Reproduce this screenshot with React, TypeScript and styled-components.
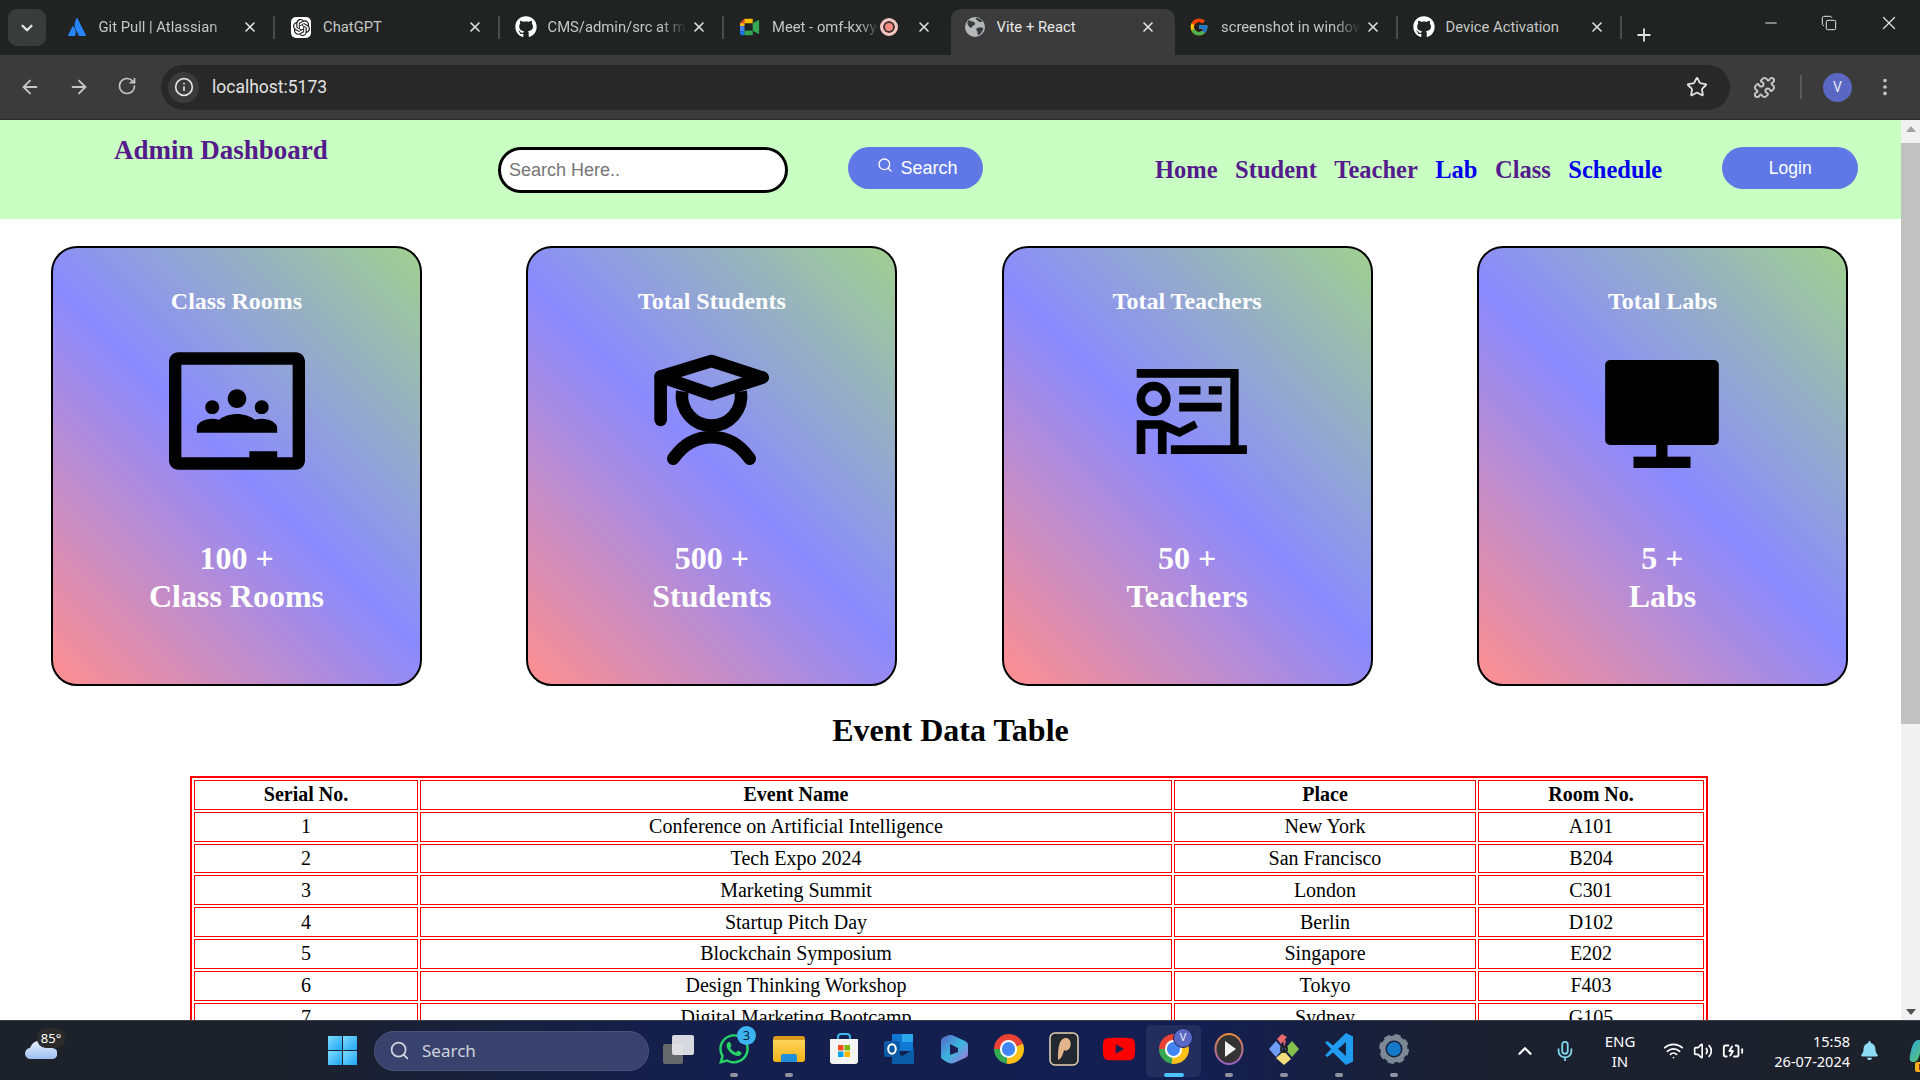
import React from 'react';
import styled, {createGlobalStyle} from 'styled-components';
import {
  ArrowLeft, ArrowRight, RotateCw, Info, Star, Puzzle, MoreVertical, X, Plus, Minus, Copy,
  ChevronDown, ChevronUp, Search as SearchIcon, Mic, Wifi, Volume2, BatteryCharging
} from 'lucide-react';
import {FaGithub, FaWhatsapp, FaYoutube, FaBell} from 'react-icons/fa';
import {FcGoogle} from 'react-icons/fc';
import {SiAtlassian, SiOpenai, SiGoogleclassroom} from 'react-icons/si';

const GlobalStyle = createGlobalStyle`
  html, body {
    margin: 0;
    padding: 0;
    height: 100%;
    overflow: hidden;
  }
  * { box-sizing: border-box; }
  a { text-decoration: none; }
`;

/* ---------- favicons and drawn icons ---------- */

const MeetIcon = () => (
  <svg width="22" height="20" viewBox="0 0 22 20">
    <path d="M5 1h9v5H5v3H0V6z" fill="#fbbc04"/>
    <path d="M0 9h5v6H0z" fill="#4285f4"/>
    <path d="M0 15h5v4H2a2 2 0 0 1-2-2z" fill="#1a73e8"/>
    <path d="M5 14h9v5H5z" fill="#34a853"/>
    <path d="M14 1v18l2-2V3z" fill="#ea4335" opacity="0"/>
    <path d="M14 6l7-4v16l-7-4z" fill="#34a853"/>
    <path d="M5 1v5H0z" fill="#ea4335"/>
  </svg>
);

const GlobeIcon = () => (
  <svg width="20" height="20" viewBox="0 0 20 20">
    <circle cx="10" cy="10" r="10" fill="#b5b7ba"/>
    <path d="M4 3c2 2 5 1 6 3s-2 2-3 4-3 0-4-2-1-3 1-5zM12 11c2-1 5-1 6 0s-2 6-4 7-1-3-2-4 -1-2 0-3zM11 1c2 0 5 1 6 3s-3 1-4 0-3-2-2-3z" fill="#3b3b3b"/>
  </svg>
);

const ClassroomGlyph = () => <SiGoogleclassroom size={136} color="#000"/>;

const StudentGlyph = () => (
  <svg width="117" height="115" viewBox="400 338 352 344" fill="none" stroke="#000" strokeWidth="38" strokeLinecap="round" strokeLinejoin="round">
    <path d="M423 405L576 358 730 408 576 458z" strokeLinejoin="round"/>
    <path d="M423 405V535"/>
    <path d="M488 450a89 89 0 1 0 176 0" strokeLinecap="butt"/>
    <path d="M461 652C490 610 530 587 576 587S662 610 691 652"/>
  </svg>
);

const TeacherGlyph = () => (
  <svg width="119" height="85" viewBox="382 382 358 256" fill="#000">
    <path d="M408 382H715V612H740V638H511V612H690V408H408z"/>
    <circle cx="459" cy="472" r="38.5" fill="none" stroke="#000" strokeWidth="26"/>
    <path d="M536 434H600V459H536zM625 434H664V459H625zM536 484H664V510H536z"/>
    <path d="M408 536H485L537 560 582 537 592 558 537 587 498 570V638H472V562H434V638H408z"/>
  </svg>
);

const LabGlyph = () => (
  <svg width="114" height="114" viewBox="406 339 341 342" fill="#000">
    <rect x="406" y="357" width="341" height="255" rx="15"/>
    <rect x="559" y="610" width="34" height="40"/>
    <rect x="491" y="647" width="171" height="34"/>
  </svg>
);

const StoreIcon = () => (
  <svg width="30" height="32" viewBox="0 0 30 32">
    <path d="M9 8V4a3 3 0 0 1 3-3h6a3 3 0 0 1 3 3v4" fill="none" stroke="#39b8ea" strokeWidth="2"/>
    <path d="M1 6h28v22a3 3 0 0 1-3 3H4a3 3 0 0 1-3-3z" fill="#f4f4f4"/>
    <path d="M9 12h5.500v5.500H9z" fill="#f25022"/>
    <path d="M15.500 12H21v5.500h-5.500z" fill="#7fba00"/>
    <path d="M9 18.500h5.500V24H9z" fill="#00a4ef"/>
    <path d="M15.500 18.500H21V24h-5.500z" fill="#ffb900"/>
  </svg>
);

const OutlookIcon = () => (
  <svg width="30" height="32" viewBox="0 0 30 32">
    <path d="M8 1h21v17H8z" fill="#0f78d4"/>
    <path d="M18 1h11v8H18z" fill="#28a8ea"/>
    <path d="M8 16l10 7 12-7v14a1 1 0 0 1-1 1H9a1 1 0 0 1-1-1z" fill="#0a5ea8"/>
    <rect x="0" y="8" width="16" height="16" rx="2" fill="#0b5aa5"/>
    <ellipse cx="8" cy="16" rx="3.800" ry="4.800" fill="none" stroke="#fff" strokeWidth="2"/>
  </svg>
);

const M365Icon = () => (
  <svg width="28" height="30" viewBox="0 0 28 30">
    <defs>
      <linearGradient id="m365" x1="0" y1="0" x2="1" y2="1">
        <stop offset="0" stopColor="#5b62c9"/>
        <stop offset="0.5" stopColor="#39b7dd"/>
        <stop offset="1" stopColor="#b06fd8"/>
      </linearGradient>
    </defs>
    <path d="M12 1L25 7c2 1 3 2 3 4v9c0 2-1 3-3 4l-11 5c-3 1-6 0-9-2L1 24V7c0-2 1-3 3-4l5-2z" fill="url(#m365)"/>
    <path d="M10 10l8 4v4l-8 3z" fill="#1a2050"/>
  </svg>
);

const ChromeBall = styled.div<{$size: number}>`
  width: ${p => p.$size}px;
  height: ${p => p.$size}px;
  border-radius: 50%;
  display: flex;
  align-items: center;
  justify-content: center;
  background: conic-gradient(#ea4335 0 70deg, #fbc116 70deg 190deg, #34a853 190deg 270deg, #ea4335 270deg);
  &::after {
    content: '';
    width: 44%;
    height: 44%;
    border-radius: 50%;
    background: #4285f4;
    border: ${p => Math.round(p.$size / 14)}px solid #fff;
    box-sizing: content-box;
  }
`;

const PapyrusIcon = () => (
  <svg width="30" height="34" viewBox="0 0 30 34">
    <rect x="1" y="1" width="28" height="32" rx="5" fill="#23272f" stroke="#e7d3b4" strokeWidth="1.500"/>
    <path d="M9 28C9 16 10 6 17 6c5 0 6 7 3 11-2 2-4 2-5 1-1 5-3 9-6 10z" fill="#e2b48c"/>
  </svg>
);

const PlayerIcon = () => (
  <svg width="30" height="32" viewBox="0 0 30 32">
    <defs>
      <linearGradient id="player" x1="0" y1="0" x2="0" y2="1">
        <stop offset="0" stopColor="#e8893f"/>
        <stop offset="1" stopColor="#9a62c2"/>
      </linearGradient>
    </defs>
    <ellipse cx="15" cy="16" rx="13.500" ry="15" fill="#333" stroke="url(#player)" strokeWidth="2"/>
    <path d="M11 8l11 8-11 8z" fill="#f2f2f2"/>
  </svg>
);

const GitIcon = () => (
  <svg width="32" height="34" viewBox="0 0 32 34">
    <path d="M1 17l7-8 7 8-7 8z" fill="#6f9cf4"/>
    <path d="M9 7l5-5 5 3-6 7z" fill="#e8696b"/>
    <path d="M17 17l7-8 7 8-7 8z" fill="#86c04d"/>
    <path d="M8 26l8-7 7 8-7 6z" fill="#f0dc7a"/>
    <circle cx="16" cy="17" r="3" fill="none" stroke="#222" strokeWidth="2"/>
    <path d="M15 7l3 2-2 6z" fill="#e8696b"/>
  </svg>
);

const VSCodeIcon = () => (
  <svg width="30" height="34" viewBox="0 0 30 34">
    <path d="M22 1l7 3.500v25L22 33 9 20.500l-5.500 4.500L1 23.500 7 17 1 10.500 3.500 9 9 13.500zM22 10l-8 7 8 7z" fill="#1f9cf0"/>
  </svg>
);

const GearIcon = () => (
  <svg width="30" height="32" viewBox="0 0 30 32">
    <circle cx="15" cy="16" r="11" fill="none" stroke="#7d8896" strokeWidth="5"/>
    <circle cx="15" cy="16" r="13" fill="none" stroke="#7d8896" strokeWidth="4" strokeDasharray="6 4.200"/>
    <circle cx="15" cy="16" r="7" fill="#1479c9"/>
  </svg>
);

const CloudIcon = () => (
  <svg width="32" height="22" viewBox="0 0 32 22">
    <defs>
      <linearGradient id="cloud" x1="0" y1="0" x2="0" y2="1">
        <stop offset="0" stopColor="#e9f2fd"/>
        <stop offset="1" stopColor="#9dbff0"/>
      </linearGradient>
    </defs>
    <path d="M6 21a5.500 5.500 0 0 1-1-11C7 4 13 1 19 3c5 2 8 5 8 7a5.500 5.500 0 0 1 0 11z" fill="url(#cloud)"/>
  </svg>
);

const CopilotIcon = () => (
  <svg width="30" height="24" viewBox="0 0 30 24">
    <defs>
      <linearGradient id="copA" x1="0" y1="0" x2="1" y2="1">
        <stop offset="0" stopColor="#2ea8e0"/>
        <stop offset="1" stopColor="#5fc85b"/>
      </linearGradient>
      <linearGradient id="copB" x1="0" y1="0" x2="1" y2="1">
        <stop offset="0" stopColor="#3a6fe0"/>
        <stop offset="1" stopColor="#e868b8"/>
      </linearGradient>
    </defs>
    <path d="M9 1h8c-3 2-5 7-6 13-1 5-3 9-6 9H4c-3 0-4-3-3-6 1-6 3-16 8-16z" fill="url(#copA)"/>
    <path d="M17 1c3 0 5 3 6 6 3 0 6 4 6 9 0 4-2 7-5 7h-9c3-1 5-5 6-10 1-5-1-10-4-12z" fill="url(#copB)"/>
  </svg>
);

/* ---------- browser chrome ---------- */

const Frame = styled.div`
  width: 1920px;
  height: 1080px;
  display: flex;
  flex-direction: column;
  overflow: hidden;
  background: #fff;
`;
const TabStrip = styled.div`
  height: 55px;
  flex: none;
  display: flex;
  align-items: flex-end;
  background: #202322;
  padding-left: 8px;
`;
const TabSearch = styled.div`
  width: 38px;
  height: 37px;
  margin: 0 6.500px 9px 0;
  border-radius: 9px;
  background: #3a3b3b;
  color: #e6e6e6;
  display: flex;
  align-items: center;
  justify-content: center;
`;
const Tab = styled.div<{$active?: boolean; $sep?: boolean}>`
  position: relative;
  width: 224.500px;
  height: 46px;
  flex: none;
  display: flex;
  align-items: center;
  padding: 0 19px 10px 14px;
  border-radius: 10px 10px 0 0;
  background: ${p => p.$active ? '#3b3b3b' : 'transparent'};
  color: ${p => p.$active ? '#e8e8e8' : '#c4c7c5'};
  &::after {
    content: '';
    display: ${p => p.$sep ? 'block' : 'none'};
    position: absolute;
    right: 2px;
    top: 7px;
    width: 2px;
    height: 23px;
    background: #4a4c4b;
  }
`;
const Favicon = styled.span`
  width: 20px;
  height: 20px;
  flex: none;
  display: flex;
  align-items: center;
  justify-content: center;
`;
const ChatGptBox = styled.span`
  width: 21px;
  height: 21px;
  border-radius: 5px;
  background: #fff;
  display: flex;
  align-items: center;
  justify-content: center;
`;
const GithubBall = styled.span`
  width: 22px;
  height: 22px;
  display: flex;
  align-items: center;
  justify-content: center;
  color: #fff;
`;
const TabTitle = styled.span<{$fade?: boolean}>`
  flex: 1;
  min-width: 0;
  margin-left: 12px;
  white-space: nowrap;
  overflow: hidden;
  font: 14.800px Roboto, "Noto Sans", sans-serif;
  mask-image: ${p => p.$fade ? 'linear-gradient(90deg, #000 80%, transparent)' : 'none'};
`;
const RecDot = styled.span`
  width: 18px;
  height: 18px;
  flex: none;
  margin-right: 14px;
  border-radius: 50%;
  border: 3px solid #f4c7c3;
  background: #f28b82;
  box-shadow: inset 0 0 0 2px #3a3030;
`;
const TabClose = styled(X)`
  flex: none;
  margin-left: 4px;
  color: #e3e3e3;
`;
const NewTab = styled(Plus)`
  flex: none;
  margin: 0 0 10px 10px;
  color: #e3e3e3;
`;
const WindowControls = styled.div`
  margin-left: auto;
  height: 100%;
  display: flex;
  align-items: center;
  padding-right: 20px;
  gap: 41px;
  color: #e3e3e3;
  padding-bottom: 10px;
`;
const Toolbar = styled.div`
  height: 64px;
  flex: none;
  display: flex;
  align-items: center;
  background: #3b3b3b;
  padding: 0 18px 0 19px;
  color: #c7c7c7;
`;
const NavIcons = styled.div`
  display: flex;
  gap: 27px;
  margin-right: 24px;
`;
const Omnibox = styled.div`
  width: 1569px;
  height: 45px;
  display: flex;
  align-items: center;
  padding: 0 16px 0 7px;
  border-radius: 23px;
  background: #282828;
`;
const SiteInfo = styled.div`
  width: 31px;
  height: 31px;
  border-radius: 50%;
  background: #3b3b3b;
  color: #e3e3e3;
  display: flex;
  align-items: center;
  justify-content: center;
`;
const UrlText = styled.span`
  margin-left: 13px;
  font: 17.500px Roboto, "Noto Sans", sans-serif;
  color: #e3e3e3;
`;
const StarIcon = styled(Star)`
  margin-left: auto;
  margin-right: 6px;
  color: #e3e3e3;
`;
const ToolIcons = styled.div`
  display: flex;
  align-items: center;
  margin-left: 23px;
`;
const ToolDivider = styled.span`
  width: 2px;
  height: 24px;
  margin: 0 21px 0 24px;
  background: #5a5a5a;
`;
const Avatar = styled.span`
  width: 29px;
  height: 29px;
  border-radius: 50%;
  background: #5a68c4;
  color: #e8e8f8;
  font: 14px Roboto, sans-serif;
  display: flex;
  align-items: center;
  justify-content: center;
  margin-right: 22px;
`;

/* ---------- page ---------- */

const Viewport = styled.div`
  flex: 1;
  min-height: 0;
  display: flex;
  overflow: hidden;
  border-top: 1px solid #2a2a2a;
`;
const Page = styled.div`
  flex: 1;
  min-width: 0;
  font-family: "Liberation Serif", "Times New Roman", serif;
`;
const Header = styled.header`
  height: 99px;
  background: #c9ffc2;
  display: flex;
  align-items: flex-start;
  padding-left: 114px;
`;
const Brand = styled.h2`
  width: 216px;
  margin: 14px 0 0;
  font-size: 27px;
  line-height: 32px;
  font-weight: 700;
  white-space: nowrap;
  color: #551a8b;
`;
const SearchInput = styled.input`
  width: 290px;
  height: 46px;
  margin: 27px 0 0 168px;
  padding: 0 8px;
  border: 3px solid #000;
  border-radius: 23px;
  background: #fff;
  outline: none;
  font: 18px "Liberation Sans", Arial, sans-serif;
  &::placeholder { color: #757575; }
`;
const PillButton = styled.button<{$width: number}>`
  width: ${p => p.$width}px;
  height: 42px;
  margin-top: 27px;
  border: none;
  border-radius: 21px;
  background: #5f78e6;
  color: #fff;
  font: 18px "Liberation Sans", Arial, sans-serif;
  display: flex;
  align-items: center;
  justify-content: center;
  gap: 7px;
`;
const SearchButton = styled(PillButton)`
  margin-left: 60px;
  padding-right: 2px;
  svg { margin-top: -6px; }
`;
const LoginButton = styled(PillButton)`
  margin-left: 60px;
  font-size: 17.500px;
`;
const NavLinks = styled.nav`
  display: flex;
  gap: 17.500px;
  margin: 35px 0 0 172px;
`;
const NavLink = styled.a<{$fresh?: boolean}>`
  font-size: 24.500px;
  line-height: 30px;
  font-weight: 700;
  color: ${p => p.$fresh ? '#0000ee' : '#551a8b'};
`;
const CardRow = styled.section`
  display: grid;
  grid-template-columns: repeat(4, 371px);
  justify-content: space-between;
  padding: 27px 53px 0 51px;
`;
const Card = styled.article`
  height: 440px;
  display: flex;
  flex-direction: column;
  align-items: center;
  padding-top: 39px;
  border: 2px solid #000;
  border-radius: 26px;
  background: linear-gradient(45deg, #ff8f8f 0%, #8a8aff 50%, #a0d090 100%);
  color: #fff;
  text-align: center;
`;
const CardTitle = styled.h3`
  margin: 0;
  font-size: 24px;
  line-height: 28px;
`;
const IconSlot = styled.div`
  height: 136px;
  margin-top: 28px;
  display: flex;
  align-items: center;
  justify-content: center;
`;
const CardCount = styled.h2`
  margin: 60px 0 0;
  font-size: 32px;
  line-height: 38px;
`;
const SectionTitle = styled.h2`
  margin: 26px 0 27px;
  font-size: 32px;
  line-height: 37px;
  text-align: center;
  color: #000;
`;
const EventTable = styled.table`
  width: 1518px;
  margin-left: 190px;
  table-layout: fixed;
  border: 2px solid #f00;
  border-spacing: 2px;
  font-size: 20px;
  color: #000;
  th, td {
    height: 29.800px;
    padding: 0;
    border: 1px solid #f00;
    text-align: center;
    line-height: 23px;
  }
`;

/* ---------- scrollbar ---------- */

const ScrollBar = styled.div`
  width: 19px;
  flex: none;
  display: flex;
  flex-direction: column;
  align-items: center;
  background: #f1f1f1;
`;
const ScrollArrow = styled.span<{$down?: boolean}>`
  flex: none;
  margin: ${p => p.$down ? 'auto 0 5px' : '6px 0 0'};
  width: 0;
  height: 0;
  border-left: 5px solid transparent;
  border-right: 5px solid transparent;
  border-bottom: ${p => p.$down ? '0' : '6px solid #a3a3a3'};
  border-top: ${p => p.$down ? '6px solid #505050' : '0'};
`;
const ScrollThumb = styled.div`
  flex: none;
  width: 100%;
  height: 581px;
  margin-top: 11px;
  background: #c1c1c1;
`;

/* ---------- taskbar ---------- */

const Taskbar = styled.footer`
  height: 60px;
  flex: none;
  display: flex;
  align-items: center;
  background: linear-gradient(90deg, #1c212a 0%, #1c212a 14%, #141f4c 35%, #131f52 62%, #1b2030 76%, #1c212a 100%);
  border-top: 1px solid #3a3e4a;
  color: #fff;
`;
const Weather = styled.div`
  position: relative;
  width: 32px;
  height: 22px;
  margin: 0 0 4px 25px;
  flex: none;
`;
const WeatherBadge = styled.span`
  position: absolute;
  left: 12px;
  top: -10px;
  width: 28px;
  height: 20px;
  border-radius: 9px;
  background: #2b2b2b;
  font: 13px "Noto Sans", sans-serif;
  display: flex;
  align-items: center;
  justify-content: center;
`;
const StartLogo = styled.div`
  width: 29px;
  height: 29px;
  margin-left: 271px;
  flex: none;
  display: grid;
  grid-template-columns: 1fr 1fr;
  gap: 1.500px;
  span { background: linear-gradient(135deg, #7fdcfb, #1fa5f5); }
`;
const TaskSearch = styled.div`
  width: 275px;
  height: 40px;
  margin-left: 17px;
  flex: none;
  border-radius: 20px;
  background: #39426c;
  border: 1px solid #4a537c;
  display: flex;
  align-items: center;
  padding-left: 14px;
  gap: 12px;
  font: 17px "Noto Sans", sans-serif;
  color: #d0d3de;
`;
const TaskIcons = styled.div`
  display: flex;
  margin-left: 2px;
  flex: none;
`;
const TaskSlot = styled.div<{$active?: boolean}>`
  position: relative;
  width: 55px;
  height: 52px;
  display: flex;
  align-items: center;
  justify-content: center;
  padding-bottom: 3px;
  background: ${p => p.$active ? 'rgba(255,255,255,0.07)' : 'transparent'};
  border-radius: 5px;
`;
const RunDot = styled.span<{$active?: boolean}>`
  position: absolute;
  bottom: 0;
  left: 50%;
  transform: translateX(-50%);
  width: ${p => p.$active ? '20px' : '8px'};
  height: 4px;
  border-radius: 2px;
  background: ${p => p.$active ? '#4cc2ff' : '#8f929e'};
`;
const CountBadge = styled.span`
  position: absolute;
  top: 1px;
  right: 5px;
  width: 19px;
  height: 19px;
  border-radius: 50%;
  background: #3db4f2;
  color: #10203a;
  font: 13px "Noto Sans", sans-serif;
  display: flex;
  align-items: center;
  justify-content: center;
`;
const ProfileBadge = styled.span`
  position: absolute;
  top: 3px;
  right: 8px;
  width: 20px;
  height: 20px;
  border-radius: 50%;
  background: #5a68c4;
  border: 1px solid #1a2050;
  color: #e8e8f8;
  font: 11px Roboto, sans-serif;
  display: flex;
  align-items: center;
  justify-content: center;
`;
const TaskStack = styled.div`
  position: relative;
  width: 31px;
  height: 29px;
`;
const StackBack = styled.span`
  position: absolute;
  left: 0;
  bottom: 0;
  width: 20px;
  height: 20px;
  border-radius: 2px;
  background: #66686c;
`;
const StackFront = styled.span`
  position: absolute;
  right: 0;
  top: 0;
  width: 22px;
  height: 20px;
  border-radius: 2px;
  background: #e9e9ec;
  opacity: 0.92;
`;
const FolderShape = styled.div`
  width: 32px;
  height: 26px;
  border-radius: 3px;
  background: linear-gradient(#ffd35a, #f3b316);
  border-top: 4px solid #d89a1a;
  display: flex;
  align-items: flex-end;
  justify-content: center;
  &::after {
    content: '';
    width: 16px;
    height: 8px;
    background: #1f8fd8;
    border-radius: 2px 2px 0 0;
  }
`;
const Tray = styled.div`
  margin-left: 93px;
  display: flex;
  align-items: center;
  flex: none;
`;
const LangBlock = styled.div`
  width: 40px;
  margin: 0 0 0 24px;
  text-align: center;
  font: 15px/20px "Noto Sans", sans-serif;
`;
const ClockBlock = styled.div`
  width: 92px;
  margin-left: 14px;
  text-align: right;
  font: 14.500px/20px "Noto Sans", sans-serif;
`;
const CopilotBox = styled.div`
  position: relative;
  width: 30px;
  height: 24px;
  margin-left: 30px;
`;
const PreBadge = styled.span`
  position: absolute;
  left: 6px;
  bottom: -9px;
  width: 23px;
  height: 10px;
  border-radius: 2px;
  background: #f2b01e;
  color: #111;
  font: 700 8px/10px "Noto Sans", sans-serif;
  letter-spacing: 0.5px;
  text-align: center;
`;

/* ---------- data ---------- */

const tabs = [
  {title: 'Git Pull | Atlassian', icon: <SiAtlassian size={18} color="#2684ff"/>, fade: true, sep: true},
  {title: 'ChatGPT', icon: <ChatGptBox><SiOpenai size={17} color="#111"/></ChatGptBox>, sep: true},
  {title: 'CMS/admin/src at main', icon: <GithubBall><FaGithub size={22}/></GithubBall>, fade: true, sep: true},
  {title: 'Meet - omf-kxvy-abc', icon: <MeetIcon/>, fade: true, rec: true},
  {title: 'Vite + React', icon: <GlobeIcon/>, active: true},
  {title: 'screenshot in windows', icon: <FcGoogle size={22}/>, fade: true, sep: true},
  {title: 'Device Activation', icon: <GithubBall><FaGithub size={22}/></GithubBall>, sep: true}
];

const links = [
  {label: 'Home'},
  {label: 'Student'},
  {label: 'Teacher'},
  {label: 'Lab', fresh: true},
  {label: 'Class'},
  {label: 'Schedule', fresh: true}
];

const cards = [
  {title: 'Class Rooms', glyph: <ClassroomGlyph/>, count: '100 +', label: 'Class Rooms'},
  {title: 'Total Students', glyph: <StudentGlyph/>, count: '500 +', label: 'Students'},
  {title: 'Total Teachers', glyph: <TeacherGlyph/>, count: '50 +', label: 'Teachers'},
  {title: 'Total Labs', glyph: <LabGlyph/>, count: '5 +', label: 'Labs'}
];

const events = [
  ['1', 'Conference on Artificial Intelligence', 'New York', 'A101'],
  ['2', 'Tech Expo 2024', 'San Francisco', 'B204'],
  ['3', 'Marketing Summit', 'London', 'C301'],
  ['4', 'Startup Pitch Day', 'Berlin', 'D102'],
  ['5', 'Blockchain Symposium', 'Singapore', 'E202'],
  ['6', 'Design Thinking Workshop', 'Tokyo', 'F403'],
  ['7', 'Digital Marketing Bootcamp', 'Sydney', 'G105']
];

const App: React.FC = () => (
  <Frame>
    <GlobalStyle/>
    <TabStrip>
      <TabSearch><ChevronDown size={18} strokeWidth={3}/></TabSearch>
      {tabs.map(tab => (
        <Tab key={tab.title} $active={tab.active} $sep={tab.sep}>
          <Favicon>{tab.icon}</Favicon>
          <TabTitle $fade={tab.fade}>{tab.title}</TabTitle>
          {tab.rec && <RecDot/>}
          <TabClose size={16} strokeWidth={2.4}/>
        </Tab>
      ))}
      <NewTab size={20} strokeWidth={2.2}/>
      <WindowControls>
        <Minus size={18} strokeWidth={1.5}/>
        <Copy size={16} strokeWidth={1.5}/>
        <X size={22} strokeWidth={1.3}/>
      </WindowControls>
    </TabStrip>
    <Toolbar>
      <NavIcons>
        <ArrowLeft size={22}/>
        <ArrowRight size={22}/>
        <RotateCw size={20}/>
      </NavIcons>
      <Omnibox>
        <SiteInfo><Info size={20}/></SiteInfo>
        <UrlText>localhost:5173</UrlText>
        <StarIcon size={22}/>
      </Omnibox>
      <ToolIcons>
        <Puzzle size={23}/>
        <ToolDivider/>
        <Avatar>V</Avatar>
        <MoreVertical size={22}/>
      </ToolIcons>
    </Toolbar>
    <Viewport>
      <Page>
        <Header>
          <Brand>Admin Dashboard</Brand>
          <SearchInput placeholder="Search Here.."/>
          <SearchButton $width={135}><SearchIcon size={16}/>Search</SearchButton>
          <NavLinks>
            {links.map(link => (
              <NavLink key={link.label} href="#" $fresh={link.fresh}>{link.label}</NavLink>
            ))}
          </NavLinks>
          <LoginButton $width={136}>Login</LoginButton>
        </Header>
        <CardRow>
          {cards.map(card => (
            <Card key={card.title}>
              <CardTitle>{card.title}</CardTitle>
              <IconSlot>{card.glyph}</IconSlot>
              <CardCount>{card.count}<br/>{card.label}</CardCount>
            </Card>
          ))}
        </CardRow>
        <SectionTitle>Event Data Table</SectionTitle>
        <EventTable>
          <colgroup>
            <col width="224"/>
            <col width="752"/>
            <col width="302"/>
            <col width="226"/>
          </colgroup>
          <thead>
            <tr>
              <th>Serial No.</th>
              <th>Event Name</th>
              <th>Place</th>
              <th>Room No.</th>
            </tr>
          </thead>
          <tbody>
            {events.map(row => (
              <tr key={row[0]}>
                {row.map(cell => <td key={cell}>{cell}</td>)}
              </tr>
            ))}
          </tbody>
        </EventTable>
      </Page>
      <ScrollBar>
        <ScrollArrow/>
        <ScrollThumb/>
        <ScrollArrow $down/>
      </ScrollBar>
    </Viewport>
    <Taskbar>
      <Weather>
        <CloudIcon/>
        <WeatherBadge>85°</WeatherBadge>
      </Weather>
      <StartLogo><span/><span/><span/><span/></StartLogo>
      <TaskSearch><SearchIcon size={21}/>Search</TaskSearch>
      <TaskIcons>
        <TaskSlot><TaskStack><StackBack/><StackFront/></TaskStack></TaskSlot>
        <TaskSlot>
          <FaWhatsapp size={34} color="#25d366"/>
          <CountBadge>3</CountBadge>
          <RunDot/>
        </TaskSlot>
        <TaskSlot><FolderShape/><RunDot/></TaskSlot>
        <TaskSlot><StoreIcon/></TaskSlot>
        <TaskSlot><OutlookIcon/></TaskSlot>
        <TaskSlot><M365Icon/></TaskSlot>
        <TaskSlot><ChromeBall $size={30}/></TaskSlot>
        <TaskSlot><PapyrusIcon/></TaskSlot>
        <TaskSlot><FaYoutube size={34} color="#f00"/></TaskSlot>
        <TaskSlot $active>
          <ChromeBall $size={30}/>
          <ProfileBadge>V</ProfileBadge>
          <RunDot $active/>
        </TaskSlot>
        <TaskSlot><PlayerIcon/><RunDot/></TaskSlot>
        <TaskSlot><GitIcon/><RunDot/></TaskSlot>
        <TaskSlot><VSCodeIcon/><RunDot/></TaskSlot>
        <TaskSlot><GearIcon/><RunDot/></TaskSlot>
      </TaskIcons>
      <Tray>
        <ChevronUp size={22} strokeWidth={2.5}/>
        <Mic size={22} color="#7fd3ea" style={{marginLeft: 18}}/>
        <LangBlock>ENG<br/>IN</LangBlock>
        <Wifi size={21} style={{marginLeft: 23}}/>
        <Volume2 size={20} style={{marginLeft: 9}}/>
        <BatteryCharging size={22} style={{marginLeft: 9}}/>
        <ClockBlock>15:58<br/>26-07-2024</ClockBlock>
        <FaBell size={19} color="#8fdcf5" style={{marginLeft: 10}}/>
        <CopilotBox>
          <CopilotIcon/>
          <PreBadge>PRE</PreBadge>
        </CopilotBox>
      </Tray>
    </Taskbar>
  </Frame>
);

export default App;
